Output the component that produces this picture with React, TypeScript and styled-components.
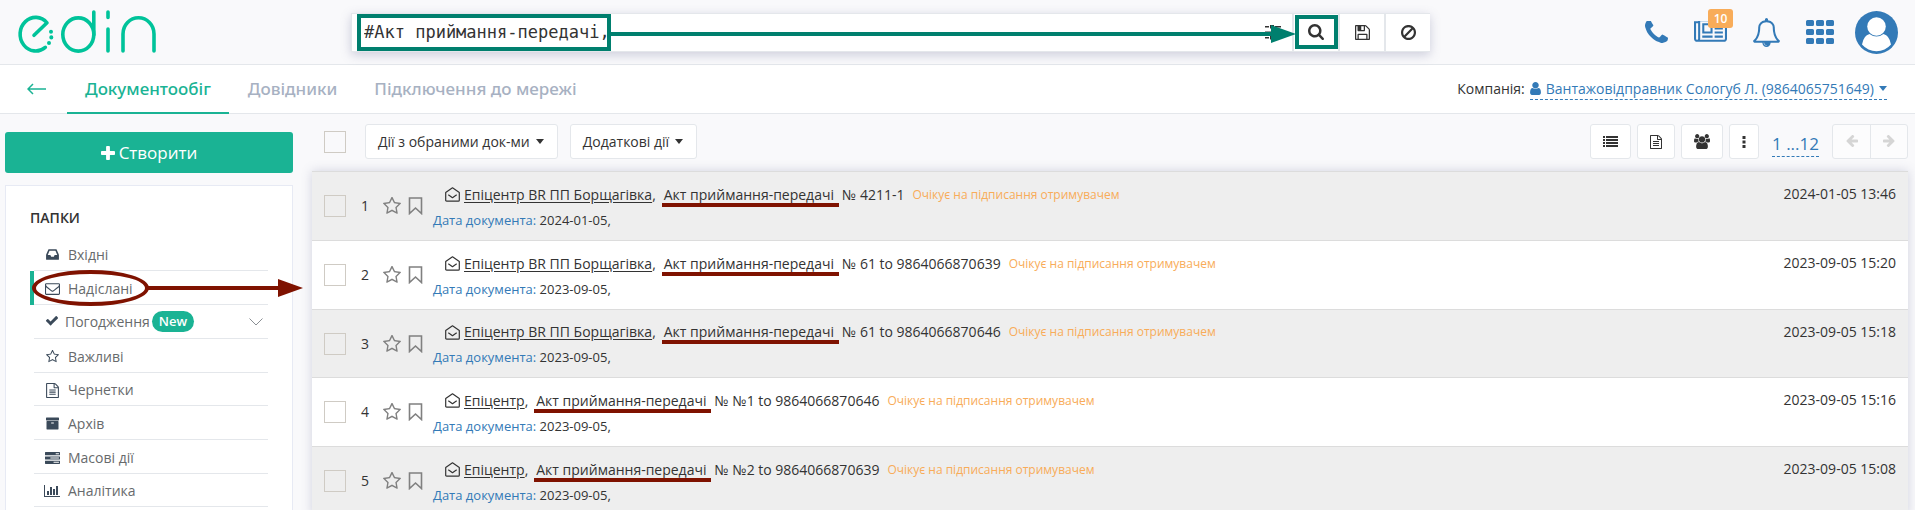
import React from "react";
import styled, { createGlobalStyle } from "styled-components";

const Global = createGlobalStyle`
  *, *::before, *::after { box-sizing: border-box; }
  html, body { margin: 0; height: 100%; }
  body {
    background: #f9f9fb;
    color: #333;
    font: 14px/20px "Open Sans", "Noto Sans", sans-serif;
    overflow: hidden;
  }
  button, input { font: inherit; color: inherit; margin: 0; }
  a { color: inherit; text-decoration: none; }
  svg { display: block; flex: none; }
`;

const green = "#1ab394";
const blue = "#337ab7";
const teal = "#007f6e";
const maroon = "#7f1200";
const line = "#e4e7eb";

/* ---------- icons ---------- */

type IconSpec = { box: string; d: string };

const icons: Record<string, IconSpec> = {
  phone: {
    box: "192 192 1408 1408",
    d: "M1600 1240q0 27-10 70.5t-21 68.5q-21 50-122 106-94 51-186 51-27 0-53-3.5t-57.5-12.5-47-14.5-55.5-20.5-49-18q-98-35-175-83-127-79-264-216t-216-264q-48-77-83-175-3-9-18-49t-20.5-55.5-14.5-47-12.5-57.5-3.5-53q0-92 51-186 56-101 106-122 25-11 68.5-21t70.5-10q14 0 21 3 18 6 53 76 11 19 30 54t35 63.5 31 53.5q3 4 17.5 25t21.5 35.5 7 28.5q0 20-28.5 50t-62 55-62 53-28.5 46q0 9 5 22.5t8.5 20.5 14 24 11.5 19q76 137 174 235t235 174q2 1 19 11.5t24 14 20.5 8.5 22.5 5q18 0 46-28.5t53-62 55-62 50-28.5q14 0 28.5 7t35.5 21.5 25 17.5q25 15 53.5 31t63.5 35 54 30q70 35 76 53 3 7 3 21z",
  },
  news: {
    box: "0 256 2048 1408",
    d: "M1024 512h-384v384h384v-384zm128 640v128h-640v-128h640zm0-768v640h-640v-640h640zm640 768v128h-512v-128h512zm0-256v128h-512v-128h512zm0-256v128h-512v-128h512zm0-256v128h-512v-128h512zm-1536 960v-960h-128v960q0 26 19 45t45 19 45-19 19-45zm1664 0v-1088h-1536v1088q0 33-11 64h1483q26 0 45-19t19-45zm128-1216v1216q0 80-56 136t-136 56h-1664q-80 0-136-56t-56-136v-1088h256v-128h1792z",
  },
  bell: {
    box: "64 0 1664 1792",
    d: "M912 1696q0-16-16-16-59 0-101.5-42.5t-42.5-101.5q0-16-16-16t-16 16q0 73 51.5 124.5t124.5 51.5q16 0 16-16zm-666-288h1300q-266-300-266-832 0-51-24-105t-69-103-121.5-80.5-169.5-31.5-169.5 31.5-121.5 80.5-69 103-24 105q0 532-266 832zm1482 0q0 52-38 90t-90 38h-448q0 106-75 181t-181 75-181-75-75-181h-448q-52 0-90-38t-38-90q50-42 91-88t85-119.5 74.5-158.5 50-206 19.5-260q0-152 117-282.5t307-158.5q-8-19-8-39 0-40 28-68t68-28 68 28 28 68q0 20-8 39 190 28 307 158.5t117 282.5q0 139 19.5 260t50 206 74.5 158.5 85 119.5 91 88z",
  },
  user: {
    box: "256 128 1280 1536",
    d: "M1536 1399q0 109-62.5 187t-150.5 78h-854q-88 0-150.5-78t-62.5-187q0-85 8.5-160.5t31.5-152 58.5-131 94-89 134.5-34.5q131 128 313 128t313-128q76 0 134.5 34.5t94 89 58.5 131 31.5 152 8.5 160.5zm-256-887q0 159-112.5 271.5t-271.5 112.5-271.5-112.5-112.5-271.5 112.5-271.5 271.5-112.5 271.5 112.5 112.5 271.5z",
  },
  search: {
    box: "64 128 1664 1664",
    d: "M1216 832q0-185-131.5-316.5t-316.5-131.5-316.5 131.5-131.5 316.5 131.5 316.5 316.5 131.5 316.5-131.5 131.5-316.5zm512 832q0 52-38 90t-90 38q-54 0-90-38l-343-342q-179 124-399 124-143 0-273.5-55.5t-225-150-150-225-55.5-273.5 55.5-273.5 150-225 225-150 273.5-55.5 273.5 55.5 225 150 150 225 55.5 273.5q0 220-124 399l343 343q37 37 37 90z",
  },
  floppy: {
    box: "128 128 1536 1536",
    d: "M512 1536h768v-384h-768v384zm896 0h128v-896q0-14-10-38.5t-20-34.5l-281-281q-10-10-34-20t-39-10v416q0 40-28 68t-68 28h-576q-40 0-68-28t-28-68v-416h-128v1280h128v-416q0-40 28-68t68-28h832q40 0 68 28t28 68v416zm-384-928v-320q0-13-9.5-22.5t-22.5-9.5h-192q-13 0-22.5 9.5t-9.5 22.5v320q0 13 9.5 22.5t22.5 9.5h192q13 0 22.5-9.5t9.5-22.5zm640 32v928q0 40-28 68t-68 28h-1344q-40 0-68-28t-28-68v-1344q0-40 28-68t68-28h928q40 0 88 20t76 48l280 280q28 28 48 76t20 88z",
  },
  ban: {
    box: "128 128 1536 1536",
    d: "M1440 893q0-161-87-295l-754 753q137 89 297 89 111 0 211.5-43.5t173.5-116.5 116-174.5 43-212.5zm-999 299l755-754q-135-91-300-91-148 0-273 73t-198 199-73 274q0 162 89 299zm1223-299q0 157-61 300t-163.5 246-245 164-298.5 61-298.5-61-245-164-163.5-246-61-300 61-299.5 163.5-245.5 245-164 298.5-61 298.5 61 245 164 163.5 245.5 61 299.5z",
  },
  sliders: {
    box: "0 0 16 16",
    d: "M0 2h4v1.500H0zM5 1h4v3.500H5zM10 2h6v1.500h-6zM0 7.500h8V9H0zM9 6.500h4V10H9zM14 7.500h2V9h-2zM0 13h4v1.500H0zM5 12h4v3.500H5zM10 13h6v1.500h-6z",
  },
  inbox: {
    box: "128 0 1536 1792",
    d: "M1151 960h316q-1-3-2.5-8.5t-2.5-7.5l-212-496h-708l-212 496q-1 3-2.5 8.5t-2.5 7.5h316l95 192h320zm513 30v482q0 26-19 45t-45 19h-1408q-26 0-45-19t-19-45v-482q0-62 25-123l238-552q10-25 36.5-42t52.5-17h832q26 0 52.5 17t36.5 42l238 552q25 61 25 123z",
  },
  envelope: {
    box: "0 0 1792 1792",
    d: "M1664 1504v-768q-32 36-69 66-268 206-426 338-51 43-83 67t-86.5 48.5-102.5 24.5h-2q-48 0-102.5-24.5t-86.5-48.5-83-67q-158-132-426-338-37-30-69-66v768q0 13 9.5 22.5t22.5 9.5h1472q13 0 22.5-9.5t9.5-22.5zm0-1051v-24.5l-.5-13-3-12.5-5.5-9-9-7.5-14-2.5h-1472q-13 0-22.5 9.5t-9.5 22.5q0 168 147 284 193 152 401 317 6 5 35 29.5t46 37.5 44.5 31.5 50.5 27.5 43 9h2q20 0 43-9t50.5-27.5 44.5-31.5 46-37.5 35-29.5q208-165 401-317 54-43 100.5-115.5t46.5-131.5zm128-37v1088q0 66-47 113t-113 47h-1472q-66 0-113-47t-47-113v-1088q0-66 47-113t113-47h1472q66 0 113 47t47 113z",
  },
  check: {
    box: "0 192 1792 1792",
    d: "M1671 566q0 40-28 68l-724 724-136 136q-28 28-68 28t-68-28l-136-136-362-362q-28-28-28-68t28-68l136-136q28-28 68-28t68 28l294 295 656-657q28-28 68-28t68 28l136 136q28 28 28 68z",
  },
  star: {
    box: "64 64 1664 1664",
    d: "M1201 1004l306-297-422-62-189-382-189 382-422 62 306 297-73 421 378-199 377 199zm527-357q0 22-26 48l-363 354 86 500q1 7 1 20 0 50-41 50-19 0-40-12l-449-236-449 236q-22 12-40 12-21 0-31.5-14.5t-10.5-35.5q0-6 2-20l86-500-364-354q-25-27-25-48 0-37 56-46l502-73 225-455q19-41 49-41t49 41l225 455 502 73q56 9 56 46z",
  },
  file: {
    box: "128 0 1536 1792",
    d: "M1596 380q28 28 48 76t20 88v1152q0 40-28 68t-68 28h-1344q-40 0-68-28t-28-68v-1600q0-40 28-68t68-28h896q40 0 88 20t76 48zm-444-244v376h376q-10-29-22-41l-313-313q-12-12-41-22zm384 1528v-1024h-416q-40 0-68-28t-28-68v-416h-768v1536h1280zm-1024-864q0-14 9-23t23-9h704q14 0 23 9t9 23v64q0 14-9 23t-23 9h-704q-14 0-23-9t-9-23v-64zm736 224q14 0 23 9t9 23v64q0 14-9 23t-23 9h-704q-14 0-23-9t-9-23v-64q0-14 9-23t23-9h704zm0 256q14 0 23 9t9 23v64q0 14-9 23t-23 9h-704q-14 0-23-9t-9-23v-64q0-14 9-23t23-9h704z",
  },
  archive: {
    box: "64 64 1664 1664",
    d: "M1088 832q0-26-19-45t-45-19h-256q-26 0-45 19t-19 45 19 45 45 19h256q26 0 45-19t19-45zm576-192v960q0 26-19 45t-45 19h-1408q-26 0-45-19t-19-45v-960q0-26 19-45t45-19h1408q26 0 45 19t19 45zm64-448v256q0 26-19 45t-45 19h-1536q-26 0-45-19t-19-45v-256q0-26 19-45t45-19h1536q26 0 45 19t19 45z",
  },
  tasks: {
    box: "0 0 1792 1664",
    d: "M1024 1408h640v-128h-640v128zm-384-512h1024v-128h-1024v128zm640-512h384v-128h-384v128zm512 832v256q0 26-19 45t-45 19h-1664q-26 0-45-19t-19-45v-256q0-26 19-45t45-19h1664q26 0 45 19t19 45zm0-512v256q0 26-19 45t-45 19h-1664q-26 0-45-19t-19-45v-256q0-26 19-45t45-19h1664q26 0 45 19t19 45zm0-512v256q0 26-19 45t-45 19h-1664q-26 0-45-19t-19-45v-256q0-26 19-45t45-19h1664q26 0 45 19t19 45z",
  },
  chart: {
    box: "0 128 2048 1536",
    d: "M640 896v512h-256v-512h256zm384-512v1024h-256v-1024h256zm1024 1152v128h-2048v-1536h128v1408h1920zm-640-896v768h-256v-768h256zm384-384v1152h-256v-1152h256z",
  },
  users: {
    box: "0 0 1920 1792",
    d: "M593 896q-162 5-265 128h-134q-82 0-138-40.5t-56-118.5q0-353 124-353 6 0 43.500 21t97.500 42.500 119 21.500q67 0 133-23-5 37-5 66 0 159 81 256zm1071 637q0 120-73 189.500t-194 69.500h-874q-121 0-194-69.500t-73-189.500q0-53 3.500-103.500t14-109 26.500-108.500 43-97.500 62-81 85.500-53.500 111.500-20q10 0 43 21.500t73 48 107 48 135 21.500 135-21.500 107-48 73-48 43-21.500q61 0 111.500 20t85.500 53.500 62 81 43 97.500 26.500 108.500 14 109 3.500 103.500zm-1024-1277q0 106-75 181t-181 75-181-75-75-181 75-181 181-75 181 75 75 181zm704 384q0 159-112.500 271.500t-271.500 112.500-271.500-112.500-112.500-271.500 112.500-271.500 271.500-112.500 271.500 112.500 112.500 271.500zm576 225q0 78-56 118.500t-138 40.500h-134q-103-123-265-128 93-97 93-256 0-29-5-66 66 23 133 23 59 0 119-21.500t97.500-42.500 43.500-21q124 0 124 353zm-128-609q0 106-75 181t-181 75-181-75-75-181 75-181 181-75 181 75 75 181z",
  },
  list: {
    box: "0 0 15 11",
    d: "M0 0h2v2H0zM3 0h12v2H3zM0 3h2v2H0zM3 3h12v2H3zM0 6h2v2H0zM3 6h12v2H3zM0 9h2v2H0zM3 9h12v2H3z",
  },
  dots: {
    box: "0 0 4 12",
    d: "M.5 0h3v3h-3zM.5 4.500h3v3h-3zM.5 9h3v3h-3z",
  },
  plus: {
    box: "192 128 1408 1408",
    d: "M1600 736v192q0 40-28 68t-68 28h-416v416q0 40-28 68t-68 28h-192q-40 0-68-28t-28-68v-416h-416q-40 0-68-28t-28-68v-192q0-40 28-68t68-28h416v-416q0-40 28-68t68-28h192q40 0 68 28t28 68v416h416q40 0 68 28t28 68z",
  },
  left: {
    box: "128 192 1536 1664",
    d: "M1664 896v128q0 53-32.500 90.500t-84.500 37.500h-704l293 294q38 36 38 90t-38 90l-75 76q-37 37-90 37-52 0-91-37l-651-652q-37-37-37-90 0-52 37-91l651-650q38-38 91-38 52 0 90 38l75 74q38 38 38 91t-38 91l-293 293h704q52 0 84.500 37.500t32.500 90.500z",
  },
  right: {
    box: "128 192 1536 1664",
    d: "M128 896v128q0 53 32.500 90.500t84.500 37.500h704l-293 294q-38 36-38 90t38 90l75 76q37 37 90 37 52 0 91-37l651-652q37-37 37-90 0-52-37-91l-651-650q-38-38-91-38-52 0-90 38l-75 74q-38 38-38 91t38 91l293 293h-704q-52 0-84.500 37.500t-32.500 90.500z",
  },
  caret: { box: "0 0 8 5", d: "M0 0h8L4 5z" },
  grid: {
    box: "0 0 28 24",
    d: "M1.500 0h5q1.500 0 1.500 1.500v3q0 1.500-1.500 1.500h-5q-1.500 0-1.500-1.500v-3q0-1.500 1.500-1.500zm10 0h5q1.500 0 1.500 1.500v3q0 1.500-1.500 1.500h-5q-1.500 0-1.500-1.500v-3q0-1.500 1.500-1.500zm10 0h5q1.500 0 1.500 1.500v3q0 1.500-1.500 1.500h-5q-1.500 0-1.500-1.500v-3q0-1.500 1.500-1.500zm-20 9h5q1.500 0 1.500 1.500v3q0 1.500-1.500 1.500h-5q-1.500 0-1.500-1.500v-3q0-1.500 1.500-1.500zm10 0h5q1.500 0 1.500 1.500v3q0 1.500-1.500 1.500h-5q-1.500 0-1.500-1.500v-3q0-1.500 1.500-1.500zm10 0h5q1.500 0 1.500 1.500v3q0 1.500-1.500 1.500h-5q-1.500 0-1.500-1.500v-3q0-1.500 1.500-1.500zm-20 9h5q1.500 0 1.500 1.500v3q0 1.500-1.500 1.500h-5q-1.500 0-1.500-1.500v-3q0-1.500 1.500-1.500zm10 0h5q1.500 0 1.500 1.500v3q0 1.500-1.500 1.500h-5q-1.500 0-1.500-1.500v-3q0-1.500 1.500-1.500zm10 0h5q1.500 0 1.500 1.500v3q0 1.500-1.500 1.500h-5q-1.500 0-1.500-1.500v-3q0-1.500 1.500-1.500z",
  },
};

const Icon = ({ name, w, h = w }: { name: string; w: number; h?: number }) => (
  <svg width={w} height={h} viewBox={icons[name].box} fill="currentColor" aria-hidden="true">
    <path d={icons[name].d} />
  </svg>
);

const Logo = () => (
  <svg width="144" height="48" viewBox="14 8 144 48" fill="none" stroke="#00c39a" strokeWidth="3.600" strokeLinecap="round" strokeLinejoin="round" aria-label="edin" role="img">
    <path d="M34 35.300L47 22.800A15.500 16.800 0 1 0 45.300 47.300" />
    <path d="M51 31.700v.1M51.300 37.300v.1M49 43v.1" strokeWidth="4" />
    <ellipse cx="78.300" cy="34.500" rx="15.500" ry="16.600" />
    <path d="M93.800 12v23M108 12v5.500M108 29v22M123 51v-17a15.500 16.200 0 0 1 31 0v17" />
  </svg>
);

const AvatarIcon = () => (
  <svg width="43" height="43" viewBox="0 0 43 43" aria-hidden="true">
    <circle cx="21.500" cy="21.500" r="21.500" fill={blue} />
    <path d="M7 33.500Q8.500 24.500 14.500 23Q21.500 28 28.500 23Q34.500 24.500 36 33.500A19 19 0 0 1 7 33.500z" fill="#fff" />
    <circle cx="21.500" cy="15.500" r="9.300" fill="#fff" />
  </svg>
);

const Bookmark = () => (
  <svg width="15" height="18" viewBox="0 0 15 18" fill="none" stroke="#808080" strokeWidth="1.600" aria-hidden="true">
    <path d="M1.500 1h12v15.500l-6-5.500-6 5.500z" />
  </svg>
);

const OpenEnvelope = () => (
  <svg width="15" height="15" viewBox="0 0 15 15" fill="none" stroke="#333" strokeWidth="1.200" strokeLinejoin="round" aria-hidden="true">
    <path d="M.7 5.500L7.500.8l6.800 4.700v7.700q0 1-1 1H1.700q-1 0-1-1zM3.300 7.800l4.200 2.900 4.200-2.900" />
  </svg>
);

/* ---------- header ---------- */

const Header = styled.header`
  display: flex;
  align-items: center;
  height: 65px;
  border-bottom: 1px solid ${line};
`;

const LogoLink = styled.a`
  flex: 0 0 351px;
  padding-left: 14px;
`;

const SearchBar = styled.form`
  position: relative;
  flex: 1;
  display: flex;
  height: 39px;
  background: #fff;
  border: 1px solid ${line};
  border-right: 0;
  box-shadow: 0 3px 10px rgba(90, 95, 140, 0.28);
`;

const SearchInput = styled.input`
  width: 254px;
  margin-left: 5px;
  padding: 0 0 1px 3px;
  border: 4px solid ${teal};
  background: #fff;
  font-family: "DejaVu Sans Mono", monospace;
  font-size: 17px;
  outline: none;
`;

const SearchOptions = styled.span`
  display: flex;
  align-items: center;
  margin-left: auto;
  padding-right: 11px;
`;

const SearchButton = styled.button<{ $marked?: boolean }>`
  position: relative;
  display: flex;
  align-items: center;
  justify-content: center;
  width: 46px;
  padding: 0;
  border: 0;
  border-left: 2px solid ${line};
  background: #fff;

  &::after {
    content: "";
    display: ${(p) => (p.$marked ? "block" : "none")};
    position: absolute;
    inset: 1px 0 2px 1px;
    border: 4px solid ${teal};
  }
`;

const Pointer = styled.span<{ $color: string }>`
  position: absolute;
  display: flex;
  align-items: center;
  height: 18px;
  pointer-events: none;

  &::before {
    content: "";
    flex: 1;
    height: 4px;
    background: ${(p) => p.$color};
  }
  &::after {
    content: "";
    border: 9px solid transparent;
    border-left: 25px solid ${(p) => p.$color};
    border-right: 0;
  }
`;

const SearchPointer = styled(Pointer)`
  left: 259px;
  right: 134px;
  top: 11px;
`;

const HeaderIcons = styled.nav`
  flex: 0 0 485px;
  display: flex;
  justify-content: flex-end;
  align-items: center;
  gap: 26px;
  padding-right: 17px;
  color: ${blue};
`;

const IconLink = styled.a`
  position: relative;
`;

const AvatarLink = styled(IconLink)`
  margin-left: -5px;
`;

const CountBadge = styled.span`
  position: absolute;
  left: 14px;
  top: -12px;
  width: 25px;
  border-radius: 3px;
  background: #f8ac59;
  color: #fff;
  font-size: 12px;
  font-weight: 600;
  line-height: 19px;
  text-align: center;
`;

/* ---------- tabs ---------- */

const TabsBar = styled.div`
  display: flex;
  align-items: center;
  height: 49px;
  padding: 0 28px 0 27px;
  background: #fff;
  border-bottom: 1px solid ${line};
`;

const BackLink = styled.a`
  margin-right: 21px;
  color: ${green};
`;

const Tab = styled.a<{ $active?: boolean }>`
  height: 50px;
  margin-right: 1px;
  padding: 0 18px;
  border-bottom: 2px solid ${(p) => (p.$active ? green : "transparent")};
  color: ${(p) => (p.$active ? green : "#a7b1c2")};
  font-family: "Noto Sans", sans-serif;
  font-size: 17px;
  font-weight: 500;
  line-height: 50px;
`;

const Company = styled.div`
  display: flex;
  gap: 5px;
  margin-left: auto;
`;

const CompanyLink = styled.a`
  display: flex;
  align-items: center;
  gap: 5px;
  border-bottom: 1px dashed ${blue};
  color: ${blue};
`;

/* ---------- page ---------- */

const Page = styled.div`
  display: flex;
  align-items: flex-start;
`;

const Sidebar = styled.aside`
  flex: 0 0 288px;
  margin: 18px 0 0 5px;
`;

const CreateButton = styled.button`
  display: flex;
  align-items: center;
  justify-content: center;
  gap: 4px;
  width: 100%;
  height: 41px;
  border: 0;
  border-radius: 3px;
  background: ${green};
  color: #fff;
  font-size: 17px;
`;

const FolderPanel = styled.nav`
  margin-top: 12px;
  padding: 22px 24px 24px;
  border: 1px solid #e7eaf4;
  background: #fff;
`;

const FolderTitle = styled.h2`
  margin: 0 0 9px;
  font-size: 14px;
  font-weight: 600;
  line-height: 20px;
`;

const FolderList = styled.ul`
  margin: 0;
  padding: 0;
  list-style: none;
`;

const FolderLink = styled.a<{ $tight?: boolean }>`
  display: flex;
  align-items: center;
  gap: ${(p) => (p.$tight ? 5 : 8)}px;
  height: 34px;
  padding: ${(p) => (p.$tight ? 0 : 2)}px 0 0 10px;
  border-bottom: 1px solid ${line};
`;

const Folder = styled.li<{ $active?: boolean }>`
  position: relative;
  border-left: 4px solid ${(p) => (p.$active ? green : "transparent")};
  color: #676a6c;

  &:nth-child(3n + 5) ${FolderLink} { height: 33px; }
`;

const FolderIcon = styled.span`
  display: flex;
  justify-content: center;
  width: 16px;
  color: #3b4a5a;
`;

const NewBadge = styled.span`
  margin-left: -3px;
  padding: 0 7px;
  border-radius: 11px;
  background: ${green};
  color: #fff;
  font-size: 13px;
  font-weight: 600;
  line-height: 21px;
`;

const Chevron = styled.svg`
  margin: 0 5px 0 auto;
`;

const FolderMark = styled.span`
  position: absolute;
  left: -2px;
  top: -1px;
  width: 117px;
  height: 36px;
  border: 4px solid ${maroon};
  border-radius: 50%;
`;

const FolderPointer = styled(Pointer)`
  left: 114px;
  top: 8px;
  width: 155px;
`;

const Main = styled.main`
  flex: 1;
  min-width: 0;
  margin: 10px 7px 0 19px;
`;

const Toolbar = styled.div`
  display: flex;
  align-items: center;
  margin-bottom: 12px;
  padding-left: 12px;
`;

const CheckBox = styled.input`
  display: block;
  appearance: none;
  width: 22px;
  height: 22px;
  border: 1px solid #cfcbc4;
`;

const DropButton = styled.button`
  display: flex;
  align-items: center;
  gap: 6px;
  height: 35px;
  margin-right: 12px;
  padding: 0 13px 0 12px;
  border: 1px solid ${line};
  border-radius: 3px;
  background: #fff;

  input + & { margin-left: 19px; }
`;

const ToolGroup = styled.div`
  display: flex;
  gap: 6px;
  margin-left: auto;
`;

const ToolButton = styled.button`
  display: flex;
  align-items: center;
  height: 35px;
  padding: 0 12px;
  border: 1px solid ${line};
  border-radius: 3px;
  background: #fff;
`;

const PageLink = styled.a`
  align-self: flex-end;
  margin: 0 13px 2px 13px;
  border-bottom: 1px dashed ${blue};
  color: ${blue};
  font-size: 17px;
  line-height: 24px;
`;

const Pager = styled.div`
  display: flex;
  border: 1px solid ${line};
  border-radius: 3px;
  background: #fcfcfd;
`;

const PagerButton = styled.button`
  display: flex;
  align-items: center;
  justify-content: center;
  width: 37px;
  height: 33px;
  border: 0;
  background: none;
  color: #d5d5d5;

  & + & { border-left: 1px solid ${line}; }
`;

const DocTable = styled.table`
  width: 100%;
  border-collapse: collapse;
  background: #fff;
  box-shadow: 0 0 10px rgba(90, 95, 140, 0.25);
`;

const DocRow = styled.tr`
  height: 69px;
  border-top: 1px solid #dcdcdc;

  &:nth-child(odd) { background: #eee; }
  &:nth-child(3) { height: 68px; }
`;

const Cell = styled.td<{ $width?: number }>`
  width: ${(p) => (p.$width ? `${p.$width}px` : "auto")};
  padding: 0;
`;

const CheckCell = styled(Cell)`
  padding-left: 12px;
`;

const Marks = styled.div`
  display: flex;
  align-items: center;
  gap: 7px;
  color: #808080;
`;

const MarkButton = styled.button`
  padding: 0;
  border: 0;
  background: none;
`;

const DocTitle = styled.div`
  display: flex;
  align-items: center;
  gap: 8px;
  padding: 2px 0 5px 12px;
`;

const Sender = styled.span`
  margin-left: -4px;
`;

const SenderLink = styled.a`
  text-decoration: underline;
  text-underline-offset: 2px;
`;

const DocType = styled.span`
  position: relative;

  &::after {
    content: "";
    position: absolute;
    left: -2px;
    right: -5px;
    bottom: -2px;
    height: 4px;
    background: ${maroon};
  }
`;

const Status = styled.span`
  color: #f8ac59;
  font-size: 12px;
`;

const DocDate = styled.div`
  font-size: 13px;
  line-height: 20px;
`;

const DateLabel = styled.span`
  color: ${blue};
`;

const TimeCell = styled(Cell)`
  padding: 12px 12px 0 0;
  text-align: right;
  vertical-align: top;
`;

const folders = [
  { icon: "inbox", w: 13, h: 15, label: "Вхідні" },
  { icon: "envelope", w: 15, h: 15, label: "Надіслані", active: true },
  { icon: "check", w: 14, h: 14, label: "Погодження", fresh: true },
  { icon: "star", w: 13, h: 13, label: "Важливі" },
  { icon: "file", w: 13, h: 15, label: "Чернетки" },
  { icon: "archive", w: 13, h: 13, label: "Архів" },
  { icon: "tasks", w: 15, h: 14, label: "Масові дії" },
  { icon: "chart", w: 16, h: 12, label: "Аналітика" },
];

const docs = [
  { from: "Епіцентр BR ПП Борщагівка", no: "№ 4211-1", date: "2024-01-05", time: "13:46" },
  { from: "Епіцентр BR ПП Борщагівка", no: "№ 61 to 9864066870639", date: "2023-09-05", time: "15:20" },
  { from: "Епіцентр BR ПП Борщагівка", no: "№ 61 to 9864066870646", date: "2023-09-05", time: "15:18" },
  { from: "Епіцентр", no: "№ №1 to 9864066870646", date: "2023-09-05", time: "15:16" },
  { from: "Епіцентр", no: "№ №2 to 9864066870639", date: "2023-09-05", time: "15:08" },
];

export default function App() {
  return (
    <>
      <Global />
      <Header>
        <LogoLink href="#"><Logo /></LogoLink>
        <SearchBar role="search">
          <SearchInput aria-label="Пошук" defaultValue="#Акт приймання-передачі," />
          <SearchOptions><Icon name="sliders" w={16} /></SearchOptions>
          <SearchButton type="button" $marked aria-label="Шукати"><Icon name="search" w={16} /></SearchButton>
          <SearchButton type="button" aria-label="Зберегти"><Icon name="floppy" w={15} /></SearchButton>
          <SearchButton type="button" aria-label="Очистити"><Icon name="ban" w={15} /></SearchButton>
          <SearchPointer $color={teal} />
        </SearchBar>
        <HeaderIcons>
          <IconLink href="#" aria-label="Телефон"><Icon name="phone" w={23} /></IconLink>
          <IconLink href="#"><Icon name="news" w={33} h={23} /><CountBadge>10</CountBadge></IconLink>
          <IconLink href="#" aria-label="Сповіщення"><Icon name="bell" w={27} h={29} /></IconLink>
          <IconLink href="#" aria-label="Сервіси"><Icon name="grid" w={28} h={24} /></IconLink>
          <AvatarLink href="#" aria-label="Профіль"><AvatarIcon /></AvatarLink>
        </HeaderIcons>
      </Header>

      <TabsBar>
        <BackLink href="#" aria-label="Назад">
          <svg width="19" height="12" viewBox="0 0 19 12" fill="none" stroke="currentColor" strokeWidth="1.500">
            <path d="M19 6H1M6 1L1 6l5 5" />
          </svg>
        </BackLink>
        <Tab href="#" $active>Документообіг</Tab>
        <Tab href="#">Довідники</Tab>
        <Tab href="#">Підключення до мережі</Tab>
        <Company>
          Компанія:
          <CompanyLink href="#">
            <Icon name="user" w={11} h={13} />
            Вантажовідправник Сологуб Л. (9864065751649)
            <Icon name="caret" w={8} h={5} />
          </CompanyLink>
        </Company>
      </TabsBar>

      <Page>
        <Sidebar>
          <CreateButton><Icon name="plus" w={14} />Створити</CreateButton>
          <FolderPanel>
            <FolderTitle>ПАПКИ</FolderTitle>
            <FolderList>
              {folders.map((f) => (
                <Folder key={f.label} $active={f.active}>
                  <FolderLink href="#" $tight={f.fresh}>
                    <FolderIcon><Icon name={f.icon} w={f.w} h={f.h} /></FolderIcon>
                    {f.label}
                    {f.fresh && (
                      <>
                        <NewBadge>New</NewBadge>
                        <Chevron width="14" height="8" viewBox="0 0 14 8" fill="none" stroke="#8a8f94">
                          <path d="M.5.500L7 7 13.500.500" />
                        </Chevron>
                      </>
                    )}
                  </FolderLink>
                  {f.active && (
                    <>
                      <FolderMark />
                      <FolderPointer $color={maroon} />
                    </>
                  )}
                </Folder>
              ))}
            </FolderList>
          </FolderPanel>
        </Sidebar>

        <Main>
          <Toolbar>
            <CheckBox type="checkbox" aria-label="Обрати всі" />
            <DropButton>Дії з обраними док-ми<Icon name="caret" w={8} h={5} /></DropButton>
            <DropButton>Додаткові дії<Icon name="caret" w={8} h={5} /></DropButton>
            <ToolGroup>
              <ToolButton aria-label="Список"><Icon name="list" w={15} h={11} /></ToolButton>
              <ToolButton aria-label="Документ"><Icon name="file" w={12} h={14} /></ToolButton>
              <ToolButton aria-label="Користувачі"><Icon name="users" w={16} h={15} /></ToolButton>
              <ToolButton aria-label="Більше"><Icon name="dots" w={4} h={12} /></ToolButton>
            </ToolGroup>
            <PageLink href="#">1 ...12</PageLink>
            <Pager>
              <PagerButton aria-label="Попередня"><Icon name="left" w={12} h={13} /></PagerButton>
              <PagerButton aria-label="Наступна"><Icon name="right" w={12} h={13} /></PagerButton>
            </Pager>
          </Toolbar>

          <DocTable>
            <tbody>
              {docs.map((d, i) => (
                <DocRow key={i}>
                  <CheckCell $width={49}><CheckBox type="checkbox" aria-label={`Обрати ${i + 1}`} /></CheckCell>
                  <Cell $width={22}>{i + 1}</Cell>
                  <Cell $width={50}>
                    <Marks>
                      <MarkButton aria-label="Важливий"><Icon name="star" w={18} /></MarkButton>
                      <MarkButton aria-label="Закладка"><Bookmark /></MarkButton>
                    </Marks>
                  </Cell>
                  <Cell>
                    <DocTitle>
                      <OpenEnvelope />
                      <Sender><SenderLink href="#">{d.from}</SenderLink>,</Sender>
                      <DocType>Акт приймання-передачі</DocType>
                      <span>{d.no}</span>
                      <Status>Очікує на підписання отримувачем</Status>
                    </DocTitle>
                    <DocDate><DateLabel>Дата документа:</DateLabel> {d.date},</DocDate>
                  </Cell>
                  <TimeCell $width={140}>{d.date} {d.time}</TimeCell>
                </DocRow>
              ))}
            </tbody>
          </DocTable>
        </Main>
      </Page>
    </>
  );
}
